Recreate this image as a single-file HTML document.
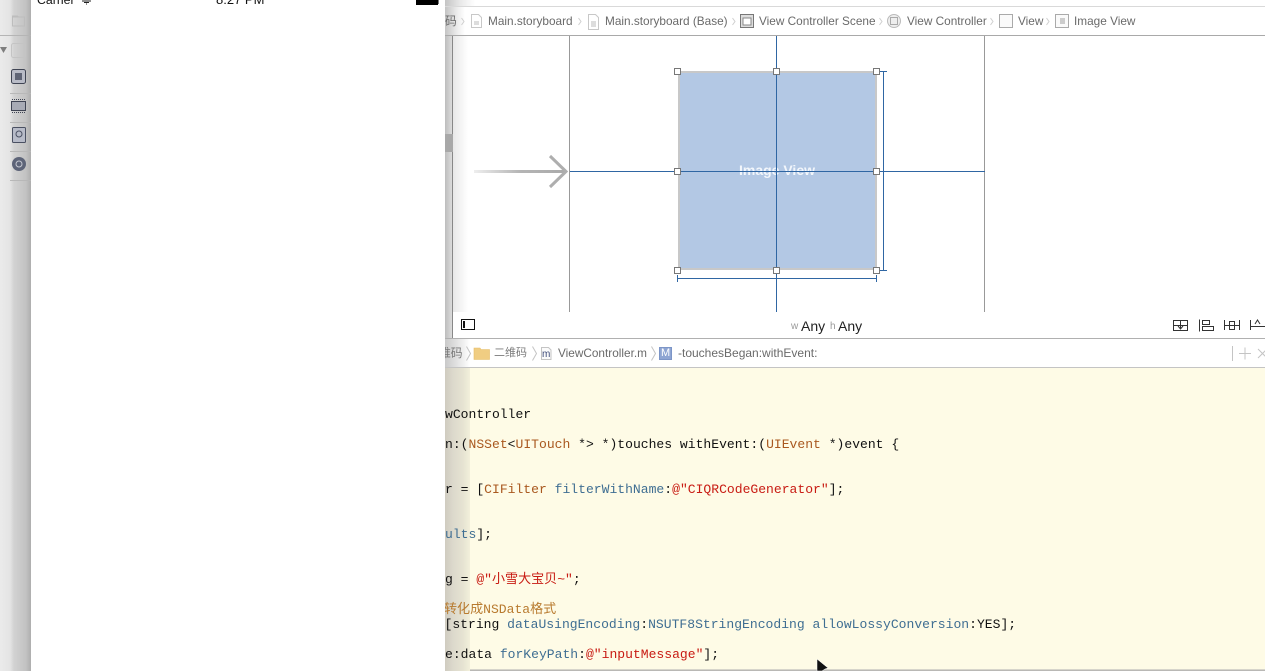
<!DOCTYPE html>
<html><head><meta charset="utf-8">
<style>
html,body{margin:0;padding:0;background:#fff}
#p{position:relative;width:1265px;height:671px;overflow:hidden;background:#fff;font-family:"Liberation Sans","Noto Sans CJK SC",sans-serif}
#p div,#p span.a,#p svg{position:absolute}
.t{position:absolute;white-space:nowrap;font-size:11.8px;line-height:14px;color:#6a6a6a}
.c{position:absolute;white-space:pre;font-family:"Liberation Mono","Noto Sans CJK SC",monospace;font-size:13.05px;line-height:16px;color:#111}
.o{color:#a9581f}.b{color:#3f6e92}.r{color:#c81b13}.g{color:#b87a2e}
.h{width:5px;height:5px;background:#fff;border:1px solid #777;z-index:3}
</style></head><body>
<div id="p">
<!-- left strip -->
<div style="left:0;top:0;width:31px;height:671px;background:linear-gradient(90deg,#ebebeb 0,#e4e4e4 10px,#d2d2d2 14px,#c2c2c2 26px,#aeaeae 31px)"></div>
<div style="left:0;top:35px;width:31px;height:1px;background:#b5b5b5"></div>
<div style="left:10px;top:93px;width:21px;height:1px;background:#b8b8b8"></div>
<div style="left:10px;top:122px;width:21px;height:1px;background:#b8b8b8"></div>
<div style="left:10px;top:151px;width:21px;height:1px;background:#b8b8b8"></div>
<div style="left:10px;top:180px;width:21px;height:1px;background:#b8b8b8"></div>
<svg style="left:0;top:0" width="31" height="180" viewBox="0 0 31 180">
<path d="M12.500 17h12v9h-12zM12.500 17v-1h5l1 1" fill="none" stroke="#bdbdbd"/>
<path d="M0 47h7l-3.500 6z" fill="#7e7e7e"/>
<rect x="11.500" y="43.500" width="14" height="14" rx="2" fill="none" stroke="#c4c4c4"/>
<rect x="11.500" y="69.500" width="14" height="14" rx="2" fill="#b9bcc7" stroke="#3f4453"/>
<rect x="15" y="73" width="7" height="7" fill="#5f6475"/>
<rect x="11.500" y="101.500" width="14" height="9" fill="#a8abb5" stroke="#3f4453"/>
<path d="M12 99.500h13M12 112.500h13" stroke="#3f4453" stroke-dasharray="1 1"/>
<rect x="12.500" y="127.500" width="13" height="15" rx="1" fill="#b7bbc8" stroke="#4a5062"/>
<circle cx="19" cy="134" r="3" fill="none" stroke="#4a5062"/>
<circle cx="19" cy="164" r="7" fill="#5d6478"/>
<circle cx="19" cy="164" r="3" fill="none" stroke="#c6c9d2"/>
</svg>
<!-- phone -->
<div style="left:31px;top:0;width:414px;height:671px;background:#fff;z-index:5"></div>
<span class="t" style="left:37px;top:-7px;font-size:12.300px;color:#111;z-index:6">Carrier</span>
<svg style="left:82px;top:0;z-index:6" width="10" height="5"><path d="M0 1h9M2 2.500h5M4 4h1" stroke="#222"/></svg>
<span class="t" style="left:216px;top:-7px;font-size:13px;color:#111;z-index:6">8:27 PM</span>
<div style="left:416px;top:0;width:22px;height:5px;background:#000;z-index:6"></div>
<div style="left:438px;top:0;width:1px;height:4px;background:#777;z-index:6"></div>

<!-- divider gradient -->
<div style="left:445px;top:0;width:30px;height:6px;background:linear-gradient(90deg,#c4c4c4,#e8e8e8 50%,#fff);z-index:1"></div>
<div style="left:445px;top:7px;width:20px;height:28px;background:linear-gradient(90deg,#c4c4c4,#ececec 60%,#fff);z-index:1"></div>
<div style="left:445px;top:36px;width:8px;height:303px;background:linear-gradient(90deg,#bdbdbd,#e0e0e0);z-index:1"></div>
<div style="left:453px;top:36px;width:15px;height:276px;background:linear-gradient(90deg,#e8e8e8,#fff);z-index:1"></div>
<div style="left:452px;top:36px;width:1px;height:303px;background:#888;z-index:2"></div>
<div style="left:445px;top:134px;width:8px;height:18px;background:#a8a8a8;z-index:2"></div>
<!-- top bar -->
<div style="left:445px;top:6px;width:820px;height:1px;background:#d9d9d9;z-index:2"></div>
<div style="left:445px;top:35px;width:820px;height:1px;background:#a9a9a9;z-index:2"></div>
<span class="t" style="left:445px;top:14px;z-index:2">码</span>
<span class="t" style="left:488px;top:14px">Main.storyboard</span>
<span class="t" style="left:605px;top:14px">Main.storyboard (Base)</span>
<span class="t" style="left:759px;top:14px">View Controller Scene</span>
<span class="t" style="left:907px;top:14px">View Controller</span>
<span class="t" style="left:1018px;top:14px">View</span>
<span class="t" style="left:1074px;top:14px">Image View</span>
<svg style="left:445px;top:0;z-index:2" width="660" height="36" viewBox="445 0 660 36" fill="none">
<path d="M461.500 18l2.500 3.500-2.500 3.500M578.500 18l2.500 3.500-2.500 3.500M732.500 18l2.500 3.500-2.500 3.500M879.500 18l2.500 3.500-2.500 3.500M990.500 18l2.500 3.500-2.500 3.500M1046.500 18l2.500 3.500-2.500 3.500" stroke="#cfcfcf"/>
<path d="M471.500 14.500h7l3 3v10h-10z" stroke="#c8c8c8"/><rect x="474" y="21" width="5" height="4" fill="#ddd"/>
<path d="M588.500 14.500h7l3 3v12h-10z" stroke="#c8c8c8"/><rect x="591" y="21" width="5" height="6" fill="#ddd"/>
<rect x="740.500" y="14.500" width="13" height="13" stroke="#777" fill="#ddd"/><rect x="743" y="18" width="8" height="7" fill="#fff" stroke="#888"/>
<circle cx="894" cy="21" r="6.500" stroke="#bbb" fill="#eee"/><rect x="890.500" y="17.500" width="7" height="7" stroke="#aaa"/>
<rect x="999.500" y="14.500" width="13" height="13" stroke="#aaa" fill="#fafafa"/>
<rect x="1055.500" y="14.500" width="13" height="13" stroke="#aaa" fill="#fafafa"/><rect x="1060" y="18" width="5" height="6" fill="#ccc"/>
</svg>

<!-- canvas -->
<div style="left:569px;top:36px;width:1px;height:276px;background:#999"></div>
<div style="left:984px;top:36px;width:1px;height:276px;background:#999"></div>
<svg style="left:470px;top:150px" width="102" height="44" viewBox="470 150 102 44" fill="none">
<defs><linearGradient id="ar" x1="0" x2="1" y1="0" y2="0"><stop offset="0" stop-color="#eee"/><stop offset=".5" stop-color="#b5b5b5"/><stop offset="1" stop-color="#aaa"/></linearGradient></defs>
<rect x="474" y="170" width="92" height="3" fill="url(#ar)"/>
<path d="M550 156l16 15.500-16 15.500" stroke="#aeaeae" stroke-width="3"/>
</svg>
<div style="left:678px;top:71px;background:#b3c8e4;border:2px solid #c8c8c8;box-sizing:content-box;width:195px;height:195px"></div>
<span class="t" style="left:739px;top:162px;font-size:14px;line-height:16px;font-weight:bold;color:#f2f6fb;z-index:1">Image View</span>
<div style="left:570px;top:171px;width:415px;height:1px;background:#2f66a3;z-index:2"></div>
<div style="left:776px;top:36px;width:1px;height:276px;background:#2f66a3;z-index:2"></div>
<div style="left:883px;top:71px;width:1px;height:200px;background:#2f66a3"></div>
<div style="left:878px;top:71px;width:9px;height:1px;background:#2f66a3"></div>
<div style="left:878px;top:270px;width:9px;height:1px;background:#2f66a3"></div>
<div style="left:677px;top:278px;width:200px;height:1px;background:#2f66a3"></div>
<div style="left:677px;top:275px;width:1px;height:7px;background:#2f66a3"></div>
<div style="left:876px;top:275px;width:1px;height:7px;background:#2f66a3"></div>
<div class="h" style="left:674px;top:68px"></div>
<div class="h" style="left:773px;top:68px"></div>
<div class="h" style="left:873px;top:68px"></div>
<div class="h" style="left:674px;top:168px"></div>
<div class="h" style="left:873px;top:168px"></div>
<div class="h" style="left:674px;top:267px"></div>
<div class="h" style="left:773px;top:267px"></div>
<div class="h" style="left:873px;top:267px"></div>

<!-- size bar -->
<svg style="left:460px;top:318px" width="17" height="14"><rect x="1.500" y="1.500" width="13" height="10" fill="none" stroke="#111"/><rect x="3" y="3" width="2" height="7" fill="#111"/></svg>
<span class="t" style="left:791px;top:320px;font-size:10px;color:#999">w</span>
<span class="t" style="left:801px;top:318px;font-size:14px;line-height:16px;color:#222">Any</span>
<span class="t" style="left:830px;top:320px;font-size:10px;color:#999">h</span>
<span class="t" style="left:838px;top:318px;font-size:14px;line-height:16px;color:#222">Any</span>
<svg style="left:1170px;top:316px" width="95" height="18" viewBox="1170 316 95 18" fill="none" stroke="#333">
<path d="M1173.500 320.500h14v10h-14zM1173.500 325.500h14M1180.500 320.500v8M1178 326l2.500 3 2.500-3"/>
<path d="M1199.500 319.500v12M1202.500 320.500h7v4h-7zM1202.500 326.500h11v4h-11z"/>
<path d="M1224.500 320v10M1239.500 320v10M1224.500 325.500h15M1229.500 321.500h5v8h-5z"/>
<path d="M1250.500 320v10M1251 326.500h14M1255 324l2.500-4 2.500 4"/>
</svg>
<div style="left:445px;top:338px;width:820px;height:1px;background:#b0b0b0;z-index:2"></div>

<!-- jump bar -->
<div style="left:445px;top:339px;width:25px;height:28px;background:linear-gradient(90deg,#c9c9c9,#efefef 18px,#fff)"></div>
<span class="t" style="left:439px;top:346px;z-index:2;color:#777">维码</span>
<svg style="left:465px;top:340px;z-index:2" width="230" height="27" viewBox="465 340 230 27" fill="none">
<path d="M466.500 346.500l4 7-4 7M532.500 346.500l4 7-4 7M651.500 346.500l4 7-4 7" stroke="#c4c4c4"/>
<path d="M474 348h6l1 1.500h8.500v10H474z" fill="#f0cd82" stroke="#e6bd68" stroke-width=".6"/>
<path d="M541.500 347.500h7l2.500 2.500v9.500h-9.500z" fill="#fbfbfb" stroke="#c4c4c4"/>
<rect x="659.500" y="347.500" width="12" height="12" fill="#8ea5d3" stroke="#7c95c7"/>
</svg>
<span class="t" style="left:542px;top:349px;font-size:10px;line-height:11px;color:#3c4a78;z-index:3">m</span>
<span class="t" style="left:661px;top:347px;font-size:11px;line-height:13px;color:#fff;z-index:3">M</span>
<span class="t" style="left:494px;top:346px;font-size:11px;color:#7a7a7a">二维码</span>
<span class="t" style="left:558px;top:346px">ViewController.m</span>
<span class="t" style="left:678px;top:346px;font-size:12px">-touchesBegan:withEvent:</span>
<svg style="left:1225px;top:343px" width="40" height="20" fill="none" stroke="#c4c4c4"><path d="M7.500 3v15M14 10.500h12M20 4.500v12M33 6l9 9M42 6l-9 9"/></svg>
<div style="left:445px;top:367px;width:820px;height:1px;background:#c4c4c4;z-index:2"></div>

<!-- editor -->
<div style="left:445px;top:368px;width:820px;height:303px;background:#fefbe6"></div>
<div style="left:445px;top:368px;width:25px;height:303px;background:linear-gradient(90deg,#cfcbc0 0,#dcd9cc 8px,#e6e3d2 18px,#f3f0db 25px);z-index:1"></div>
<div style="left:445px;top:669px;width:820px;height:2px;background:linear-gradient(#e6e4d6,#aaa)"></div>
<div style="left:0;top:0;width:0;height:0;z-index:2">
<span class="c" style="left:445px;top:407px">wController</span>
<span class="c" style="left:445px;top:437px">n:(<span class="o">NSSet</span>&lt;<span class="o">UITouch</span> *&gt; *)touches withEvent:(<span class="o">UIEvent</span> *)event {</span>
<span class="c" style="left:445px;top:482px">r = [<span class="o">CIFilter</span> <span class="b">filterWithName</span>:<span class="r">@"CIQRCodeGenerator"</span>];</span>
<span class="c" style="left:445px;top:527px"><span class="b">ults</span>];</span>
<span class="c" style="left:445px;top:572px">g = <span class="r">@"小雪大宝贝~"</span>;</span>
<span class="c g" style="left:444px;top:602px">转化成NSData格式</span>
<span class="c" style="left:444.500px;top:617px">[string <span class="b">dataUsingEncoding</span>:<span class="b">NSUTF8StringEncoding</span> <span class="b">allowLossyConversion</span>:YES];</span>
<span class="c" style="left:445px;top:647px">e:data <span class="b">forKeyPath</span>:<span class="r">@"inputMessage"</span>];</span>
</div>
<svg style="left:815px;top:658px;z-index:3" width="14" height="13"><path d="M2 1v12h5l3-2 3-1z" fill="#111" stroke="#fff" stroke-width=".5"/></svg>
</div>
</body></html>
